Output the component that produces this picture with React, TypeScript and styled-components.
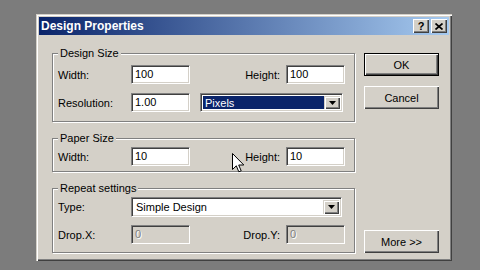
import styled, { createGlobalStyle } from "styled-components";

const face = "#d4d0c8";

const GlobalStyle = createGlobalStyle`
  html, body {
    margin: 0;
    padding: 0;
    background: #7c7c7c;
    font-family: "Liberation Sans", Arial, sans-serif;
    font-size: 11px;
    color: #000;
  }
`;

const Screen = styled.div`
  width: 480px;
  height: 270px;
  padding: 14px 0 0 36px;
  box-sizing: border-box;
  overflow: hidden;
`;

const Dialog = styled.div`
  position: relative;
  width: 416px;
  height: 247px;
  box-sizing: border-box;
  padding: 3px;
  background: ${face};
  box-shadow: inset 1px 1px 0 ${face}, inset 2px 2px 0 #fff, inset -1px -1px 0 #404040,
    inset -2px -2px 0 #808080;
  display: flex;
  flex-direction: column;
`;

const TitleBar = styled.div`
  flex-shrink: 0;
  height: 18px;
  display: flex;
  align-items: center;
  padding: 0 2px;
  background: linear-gradient(to right, #0a246a, #a6caf0);
`;

const Title = styled.span`
  flex: 1;
  color: #fff;
  font-weight: bold;
  font-size: 12px;
`;

const CaptionButton = styled.button<{ $gap?: number }>`
  width: 16px;
  height: 14px;
  margin-left: ${(p) => p.$gap ?? 0}px;
  padding: 0;
  display: flex;
  align-items: center;
  justify-content: center;
  background: ${face};
  border: none;
  box-shadow: inset 1px 1px 0 #fff, inset -1px -1px 0 #404040, inset -2px -2px 0 #808080;
  font-family: "Liberation Sans", Arial, sans-serif;
  font-weight: bold;
  font-size: 11px;
  line-height: 1;
  color: #000;
`;

const Body = styled.div`
  flex: 1;
  display: flex;
  gap: 9px;
  padding: 18px 10px 5px 13px;
`;

const Groups = styled.div`
  width: 303px;
  display: flex;
  flex-direction: column;
  gap: 16px;
`;

const GroupBox = styled.div<{ $bottom: number }>`
  border: 1px solid #808080;
  box-shadow: inset 1px 1px 0 #fff, 1px 1px 0 #fff;
  padding: 0 9px ${(p) => p.$bottom}px 5px;
`;

const Legend = styled.div<{ $after: number }>`
  width: fit-content;
  margin: -7px 0 ${(p) => p.$after}px 0;
  padding: 0 2px;
  background: ${face};
  line-height: 13px;
  font-size: 11px;
`;

const Rows = styled.div<{ $gap: number }>`
  display: flex;
  flex-direction: column;
  gap: ${(p) => p.$gap}px;
`;

const Row = styled.div<{ $h?: number }>`
  display: grid;
  grid-template-columns: 73px 59px 1fr 59px;
  align-items: center;
  height: ${(p) => p.$h ?? 19}px;
`;

const Label = styled.span<{ $right?: boolean }>`
  text-align: ${(p) => (p.$right ? "right" : "left")};
  padding-right: ${(p) => (p.$right ? 6 : 0)}px;
  color: #000;
`;

const Field = styled.div<{ $disabled?: boolean }>`
  height: 19px;
  box-sizing: border-box;
  border-top: 1px solid #808080;
  border-left: 1px solid #808080;
  border-bottom: 1px solid #fff;
  border-right: 1px solid #fff;
  box-shadow: inset 1px 1px 0 #404040, inset -1px -1px 0 ${face};
  background: ${(p) => (p.$disabled ? face : "#fff")};
  color: ${(p) => (p.$disabled ? "#808080" : "#000")};
  text-shadow: ${(p) => (p.$disabled ? "1px 1px 0 #fff" : "none")};
  padding: 0 0 0 3px;
  line-height: 17px;
  font-size: 11px;
`;

const Select = styled.div<{ $from: number; $ml?: number; $mr?: number; $h?: number }>`
  grid-column: ${(p) => p.$from} / 5;
  margin-left: ${(p) => p.$ml ?? 0}px;
  margin-right: ${(p) => p.$mr ?? 0}px;
  height: ${(p) => p.$h ?? 19}px;
  box-sizing: border-box;
  display: flex;
  padding: 2px;
  border-top: 1px solid #808080;
  border-left: 1px solid #808080;
  border-bottom: 1px solid #fff;
  border-right: 1px solid #fff;
  box-shadow: inset 1px 1px 0 #404040, inset -1px -1px 0 ${face};
  background: #fff;
`;

const SelectText = styled.div<{ $active?: boolean }>`
  flex: 1;
  display: flex;
  align-items: center;
  padding-left: 2px;
  background: ${(p) => (p.$active ? "#0a246a" : "#fff")};
  color: ${(p) => (p.$active ? "#fff" : "#000")};
  font-size: 11px;
`;

const DropButton = styled.div`
  width: 16px;
  display: flex;
  align-items: center;
  justify-content: center;
  background: ${face};
  box-shadow: inset 1px 1px 0 ${face}, inset 2px 2px 0 #fff, inset -1px -1px 0 #404040,
    inset -2px -2px 0 #808080;
`;

const Buttons = styled.div`
  width: 75px;
  display: flex;
  flex-direction: column;
  gap: 10px;
`;

const Button = styled.button<{ $default?: boolean; $bottom?: boolean }>`
  height: 23px;
  width: 75px;
  margin-top: ${(p) => (p.$bottom ? "auto" : "0")};
  padding: 0;
  box-sizing: border-box;
  background: ${face};
  border: ${(p) => (p.$default ? "1px solid #000" : "none")};
  box-shadow: inset 1px 1px 0 #fff, inset -1px -1px 0 #404040, inset -2px -2px 0 #808080;
  font-family: "Liberation Sans", Arial, sans-serif;
  font-size: 11px;
  color: #000;
`;

const Cursor = styled.svg`
  position: absolute;
  left: 196px;
  top: 139px;
`;

function Arrow() {
  return (
    <svg width="7" height="4" viewBox="0 0 7 4">
      <path d="M0 0 H7 L3.5 4 Z" fill="#000" />
    </svg>
  );
}

function App() {
  return (
    <Screen>
      <GlobalStyle />
      <Dialog>
        <TitleBar>
          <Title>Design Properties</Title>
          <CaptionButton>?</CaptionButton>
          <CaptionButton $gap={2}>
            <svg width="8" height="7" viewBox="0 0 8 7">
              <path d="M0.5 0.5 L7.5 6.5 M7.5 0.5 L0.5 6.5" stroke="#000" strokeWidth="1.7" />
            </svg>
          </CaptionButton>
        </TitleBar>
        <Body>
          <Groups>
            <GroupBox $bottom={9}>
              <Legend $after={5}>Design Size</Legend>
              <Rows $gap={9}>
                <Row>
                  <Label>Width:</Label>
                  <Field>100</Field>
                  <Label $right>Height:</Label>
                  <Field>100</Field>
                </Row>
                <Row>
                  <Label>Resolution:</Label>
                  <Field>1.00</Field>
                  <Select $from={3} $ml={10} $mr={2}>
                    <SelectText $active>Pixels</SelectText>
                    <DropButton>
                      <Arrow />
                    </DropButton>
                  </Select>
                </Row>
              </Rows>
            </GroupBox>
            <GroupBox $bottom={5}>
              <Legend $after={2}>Paper Size</Legend>
              <Rows $gap={9}>
                <Row>
                  <Label>Width:</Label>
                  <Field>10</Field>
                  <Label $right>Height:</Label>
                  <Field>10</Field>
                </Row>
              </Rows>
            </GroupBox>
            <GroupBox $bottom={8}>
              <Legend $after={2}>Repeat settings</Legend>
              <Rows $gap={8}>
                <Row $h={20}>
                  <Label>Type:</Label>
                  <Select $from={2} $mr={3} $h={20}>
                    <SelectText>Simple Design</SelectText>
                    <DropButton>
                      <Arrow />
                    </DropButton>
                  </Select>
                </Row>
                <Row>
                  <Label>Drop.X:</Label>
                  <Field $disabled>0</Field>
                  <Label $right>Drop.Y:</Label>
                  <Field $disabled>0</Field>
                </Row>
              </Rows>
            </GroupBox>
          </Groups>
          <Buttons>
            <Button $default>OK</Button>
            <Button>Cancel</Button>
            <Button $bottom>More &gt;&gt;</Button>
          </Buttons>
        </Body>
        <Cursor width="13" height="20" viewBox="0 0 13 20">
          <path
            d="M0.5 0.5 L0.5 16.5 L4.3 12.8 L6.8 18.8 L9.2 17.8 L6.7 12 L11.8 12 Z"
            fill="#fff"
            stroke="#000"
            strokeWidth="1"
            strokeLinejoin="miter"
          />
        </Cursor>
      </Dialog>
    </Screen>
  );
}

export default App;
